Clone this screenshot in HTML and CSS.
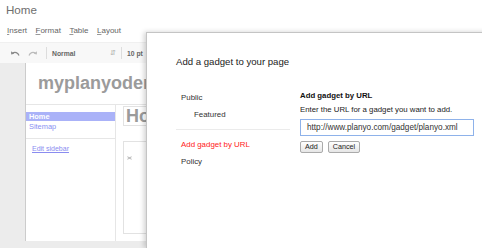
FILE: index.html
```html
<!DOCTYPE html>
<html lang="en">
<head>
    <meta charset="UTF-8">
    <meta name="viewport" content="width=device-width, initial-scale=1.0">
    <title>Home</title>
    <link rel="stylesheet" href="styles.css">
</head>
<body>

    <div class="editor">
        <div class="doc-title">Home</div>
        <nav class="menu">
            <span><u>I</u>nsert</span>
            <span><u>F</u>ormat</span>
            <span><u>T</u>able</span>
            <span><u>L</u>ayout</span>
        </nav>
        <div class="toolbar">
            <span class="tb-icon">
                <svg width="10" height="6" viewBox="0 0 10 6"><path d="M9 5.5C8 2.5 5 1.5 2.5 3" fill="none" stroke="#888" stroke-width="1.2"/><path d="M1 1.2L1.2 4.6L4.4 3.8Z" fill="#888"/></svg>
            </span>
            <span class="tb-icon faded">
                <svg width="10" height="6" viewBox="0 0 10 6"><path d="M1 5.5C2 2.5 5 1.5 7.5 3" fill="none" stroke="#bbb" stroke-width="1.2"/><path d="M9 1.2L8.8 4.6L5.6 3.8Z" fill="#bbb"/></svg>
            </span>
            <span class="tb-sep"></span>
            <span class="tb-select style-select">Normal <span class="tb-arrows">&#8693;</span></span>
            <span class="tb-sep"></span>
            <span class="tb-select">10 pt</span>
        </div>
        <div class="canvas">
            <div class="page">
                <div class="site-name">myplanyoder</div>
                <div class="page-body">
                    <aside class="sidebar">
                        <div class="nav-list">
                            <a class="nav-item active">Home</a>
                            <a class="nav-item">Sitemap</a>
                        </div>
                        <a class="edit-link">Edit sidebar</a>
                    </aside>
                    <div class="content">
                        <h1 class="page-heading">Home</h1>
                        <div class="gadget-box">
                            <svg width="5" height="4" viewBox="0 0 5 4"><path d="M0.5 0.5L4.5 3.5M4.5 0.5L0.5 3.5M0.5 2H4.5" stroke="#aaa" stroke-width="0.7" fill="none"/></svg>
                        </div>
                    </div>
                </div>
            </div>
        </div>
    </div>

    <!-- modal sits over the editor -->
    <div class="dialog">
        <div class="dialog-title">Add a gadget to your page</div>
        <div class="dialog-body">
            <div class="gadget-nav">
                <div class="nav-group">
                    <div class="gn-item">Public</div>
                    <div class="gn-item sub">Featured</div>
                </div>
                <div class="gn-item selected">Add gadget by URL</div>
                <div class="gn-item">Policy</div>
            </div>
            <div class="url-pane">
                <div class="url-heading">Add gadget by URL</div>
                <div class="url-hint">Enter the URL for a gadget you want to add.</div>
                <div class="url-input">http://www.planyo.com/gadget/planyo.xml</div>
                <div class="url-actions">
                    <button class="btn">Add</button>
                    <button class="btn">Cancel</button>
                </div>
            </div>
        </div>
    </div>

</body>
</html>
```

FILE: styles.css
```css
html, body {
    margin: 0; padding: 0;
    width: 482px; height: 248px;
    overflow: hidden;
    background: #fff;
    font-family: "Liberation Sans", Arial, sans-serif;
}

body { position: relative; }

.editor { display: flex; flex-direction: column; height: 100%; }

.doc-title {
    height: 20px; box-sizing: border-box;
    padding: 3px 0 0 6px;
    font-size: 11.6px; line-height: 14px; color: #6e6e6e;
}

.menu {
    display: flex; gap: 8.5px;
    height: 22px; box-sizing: border-box;
    padding: 5px 0 0 7px;
    font-size: 8px; line-height: 12px; color: #666;
}
.menu u { text-decoration-color: #999; }

.toolbar {
    display: flex; align-items: center;
    height: 21px; box-sizing: border-box;
    padding-left: 10px;
    background: #f8f8f8;
    border-top: 1px solid #f0f0f0;
}
.tb-icon { display: flex; width: 18px; }
.tb-sep { width: 1px; height: 12px; background: #ddd; margin: 0 5px 0 0; }
.tb-select {
    font-size: 6.8px; font-weight: bold; color: #666;
    display: flex; align-items: center;
}
.style-select { width: 64px; justify-content: space-between; padding-right: 5px; }
.tb-arrows { font-size: 7px; font-weight: normal; color: #aaa; }

.canvas {
    flex: 1;
    background: #ececec;
    padding-left: 25px;
    display: flex;
}
.page {
    width: 260px; height: 178px;
    background: #fff;
    border-left: 1px solid #ccc;
    display: flex; flex-direction: column;
}

.site-name {
    padding: 9px 0 0 12px; height: 42px; box-sizing: border-box;
    font-size: 18px; font-weight: bold; color: #9b9b9b; line-height: 22px;
    border-bottom: 1px solid #e6e6e6;
}

.page-body { display: flex; flex: 1; }

.sidebar { width: 89px; border-right: 1px solid #e6e6e6; }
.nav-list {
    display: flex; flex-direction: column; gap: 1px;
    padding: 7px 0 7px; border-bottom: 1px solid #e6e6e6;
}
.nav-item {
    display: block; padding-left: 3px;
    font-size: 7.4px; line-height: 9px; color: #8890f2;
}
.nav-item.active { background: #aab2f8; color: #fff; font-weight: bold; }
.edit-link {
    display: block; padding: 5px 0 0 6px;
    font-size: 7px; line-height: 9px; color: #8a8cf0; text-decoration: underline;
}

.content { padding: 1px 0 0 7px; flex: 1; }
.page-heading {
    margin: 0; padding: 0 2px;
    border: 1px solid #e2e2e2;
    font-size: 18px; font-weight: bold; line-height: 18px; color: #9b9b9b;
}
.gadget-box {
    margin-top: 15px; height: 93px; box-sizing: border-box;
    border: 1px solid #e2e2e2;
    padding: 4px 0 0 3px;
}

/* dialog */
.dialog {
    position: absolute; left: 146px; top: 32px;
    width: 345px; height: 216px;
    background: #fff;
    border: 1px solid #c4c4c4; border-bottom: 0;
    box-shadow: -2px 0 5px rgba(0, 0, 0, 0.18);
    padding: 0 0 0 29px; box-sizing: border-box;
    color: #333;
}
.dialog-title {
    padding-top: 22px;
    font-size: 9.6px; line-height: 14px; color: #222;
}
.dialog-body { display: flex; gap: 10px; margin-top: 20px; }

.gadget-nav { width: 114px; font-size: 7.9px; }
.nav-group { padding-bottom: 6px; border-bottom: 1px solid #ebebeb; margin-bottom: 6px; }
.gn-item { line-height: 17px; padding-left: 5px; color: #333; }
.gn-item.sub { padding-left: 18px; }
.gn-item.selected { color: #f22; }

.url-pane { font-size: 7.8px; color: #222; }
.url-heading { font-weight: bold; line-height: 14px; color: #111; }
.url-hint { line-height: 14px; }
.url-input {
    width: 174px; height: 17px; box-sizing: border-box;
    margin-top: 2px; padding-left: 6px;
    border: 1px solid #8eb2ea;
    font-size: 8.2px; line-height: 15px; color: #333;
}
.url-actions { display: flex; gap: 5px; margin-top: 5px; }
.btn {
    height: 12px; padding: 0 4px;
    border: 1px solid #aaa; border-radius: 2px;
    background: linear-gradient(#fff, #e6e6e6);
    font-family: inherit; font-size: 7.2px; line-height: 10px; color: #222;
}
```
